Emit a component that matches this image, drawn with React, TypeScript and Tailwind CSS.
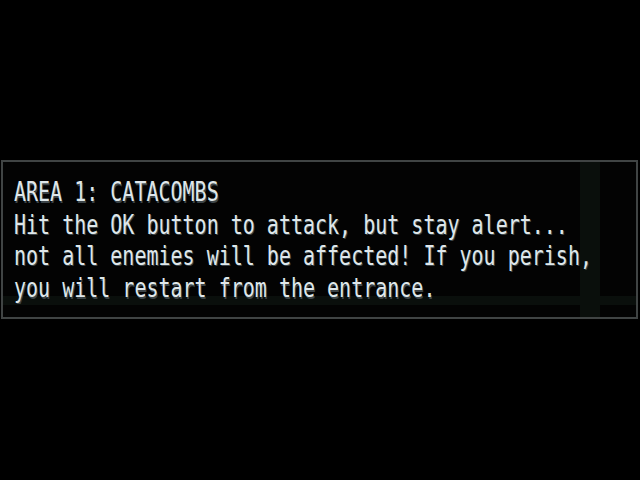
import React from "react";

const lines = [
  "AREA 1: CATACOMBS",
  "Hit the OK button to attack, but stay alert...",
  "not all enemies will be affected! If you perish,",
  "you will restart from the entrance.",
];

export default function App() {
  return (
    <div className="min-h-[480px] w-[640px] bg-black pt-[160px] pl-px">
      <div className="h-[159px] w-[637px] border-2 border-[#404444] bg-[#030303] bg-[linear-gradient(to_bottom,transparent_134px,#0a0f0c_134px,#0a0f0c_143px,transparent_143px),linear-gradient(to_right,transparent_577px,#0a0f0c_577px,#0a0f0c_597px,transparent_597px)] pl-[11px] pt-[15px]">
        <div className="origin-top-left scale-y-[1.35] whitespace-pre font-['DejaVu_Sans_Mono',monospace] text-[20px] leading-[23.7px] text-[#dfe7ea] [text-shadow:1px_1px_0_#3c4448]">
          {lines.map((l, i) => (
            <div key={i}>{l}</div>
          ))}
        </div>
      </div>
    </div>
  );
}
